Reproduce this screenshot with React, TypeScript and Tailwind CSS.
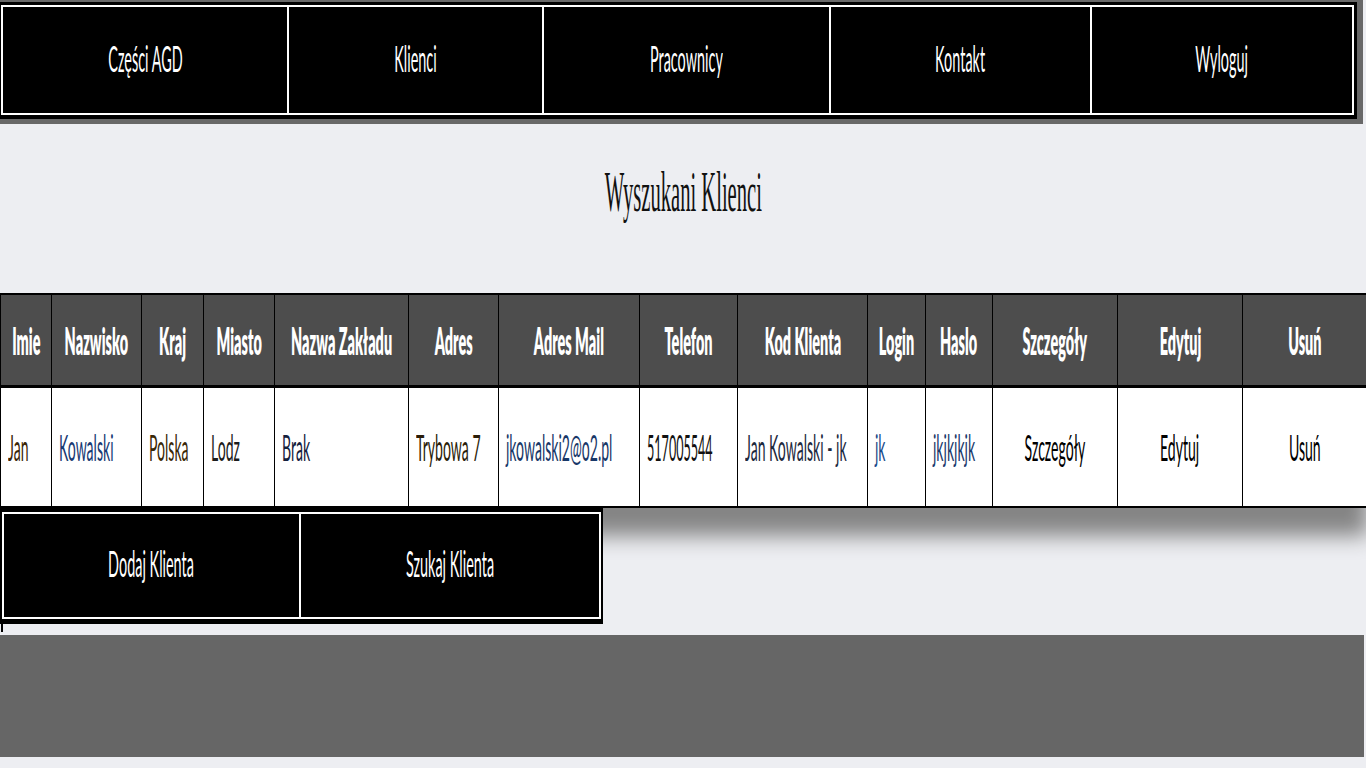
const NAV = [
  { label: "Części AGD", w: "w-[284px]" },
  { label: "Klienci", w: "w-[255px] border-l-2" },
  { label: "Pracownicy", w: "w-[287px] border-l-2" },
  { label: "Kontakt", w: "w-[261px] border-l-2" },
  { label: "Wyloguj", w: "w-[262px] border-l-2" },
];

const COLS = [
  { head: "Imie", value: "Jan", w: "w-[51px]", color: "text-[#3b2606]" },
  { head: "Nazwisko", value: "Kowalski", w: "w-[90px]", color: "text-[#173a74]" },
  { head: "Kraj", value: "Polska", w: "w-[62px]", color: "text-[#3a2806]" },
  { head: "Miasto", value: "Lodz", w: "w-[71px]", color: "text-[#1c1c1c]" },
  { head: "Nazwa Zakładu", value: "Brak", w: "w-[134px]", color: "text-[#14213d]" },
  { head: "Adres", value: "Trybowa 7", w: "w-[90px]", color: "text-[#2a1d08]" },
  { head: "Adres Mail", value: "jkowalski2@o2.pl", w: "w-[141px]", color: "text-[#183868]" },
  { head: "Telefon", value: "517005544", w: "w-[98px]", color: "text-[#111]", narrow: true },
  { head: "Kod Klienta", value: "Jan Kowalski - jk", w: "w-[130px]", color: "text-[#1d2a3e]" },
  { head: "Login", value: "jk", w: "w-[58px]", color: "text-[#1a4a8a]" },
  { head: "Haslo", value: "jkjkjkjk", w: "w-[67px]", color: "text-[#1b3a6c]" },
  { head: "Szczegóły", value: "Szczegóły", w: "w-[125px]", color: "text-black", center: true },
  { head: "Edytuj", value: "Edytuj", w: "w-[125px]", color: "text-black", center: true },
  { head: "Usuń", value: "Usuń", w: "w-[125px]", color: "text-black", center: true },
];

const sans = "font-['Lato','Liberation_Sans',sans-serif]";

function Squeeze({ children, className = "scale-x-[0.39]" }: { children: React.ReactNode; className?: string }) {
  return <span className={`inline-block whitespace-nowrap ${className}`}>{children}</span>;
}

export default function App() {
  return (
    <div className={`min-h-screen w-full overflow-hidden bg-[#edeef2] ${sans}`}>
      {/* górne menu */}
      <div className="w-[1363px] bg-[#686868] pt-[2px] pr-[6px] pb-[5px]">
        <div className="h-[117px] bg-black pt-[3px] pl-[1px] pr-[3px] pb-[4px]">
          <div className="flex h-full border-2 border-white">
            {NAV.map((n) => (
              <a key={n.label} href="#" className={`flex items-center justify-center border-white pb-[6px] text-[37px] leading-none text-white ${n.w}`}>
                <Squeeze>{n.label}</Squeeze>
              </a>
            ))}
          </div>
        </div>
      </div>

      <div className="h-[169px] pt-[39px] text-center">
        <h1 className="font-['Liberation_Serif','Times_New_Roman',serif] text-[58px] leading-[58px] text-[#111]">
          <Squeeze className="scale-x-[0.355]">Wyszukani Klienci</Squeeze>
        </h1>
      </div>

      {/* tabela klientów */}
      <div className="w-[1368px] border-t-2 border-b-2 border-l border-black bg-white shadow-[0_28px_20px_#858585]">
        <div className="flex h-[93px] border-b-[3px] border-black bg-[#4d4d4d]">
          {COLS.map((c) => (
            <div key={c.head} className={`flex shrink-0 items-center justify-center border-r border-black text-[37px] font-extrabold leading-none text-white ${c.w}`}>
              <Squeeze>{c.head}</Squeeze>
            </div>
          ))}
        </div>
        <div className="flex h-[118px]">
          {COLS.map((c) => (
            <div
              key={c.head}
              className={`flex shrink-0 items-center border-r border-black pb-[2px] text-[37px] leading-none ${c.w} ${c.color} ${c.center ? "justify-center" : "pl-[7px]"}`}
            >
              <Squeeze className={`${c.narrow ? "scale-x-[0.34]" : "scale-x-[0.38]"} ${c.center ? "" : "origin-left"}`}>{c.value}</Squeeze>
            </div>
          ))}
        </div>
      </div>

      {/* dolne menu */}
      <div className="relative h-[116px] w-[603px] bg-black pt-[4px] pl-[2px] pr-[2px] pb-[5px]">
        <div className="flex h-full border-2 border-white">
          <a href="#" className="flex w-[295px] items-center justify-center pb-[6px] text-[37px] leading-none text-white">
            <Squeeze>Dodaj Klienta</Squeeze>
          </a>
          <a href="#" className="flex w-[300px] items-center justify-center border-l-2 border-white pb-[6px] text-[37px] leading-none text-white">
            <Squeeze>Szukaj Klienta</Squeeze>
          </a>
        </div>
      </div>
      <div className="h-[11px]">
        <div className="ml-[1px] h-[8px] w-[2px] bg-black" />
      </div>

      <div className="h-[122px] w-[1364px] bg-[#666]" />
    </div>
  );
}
